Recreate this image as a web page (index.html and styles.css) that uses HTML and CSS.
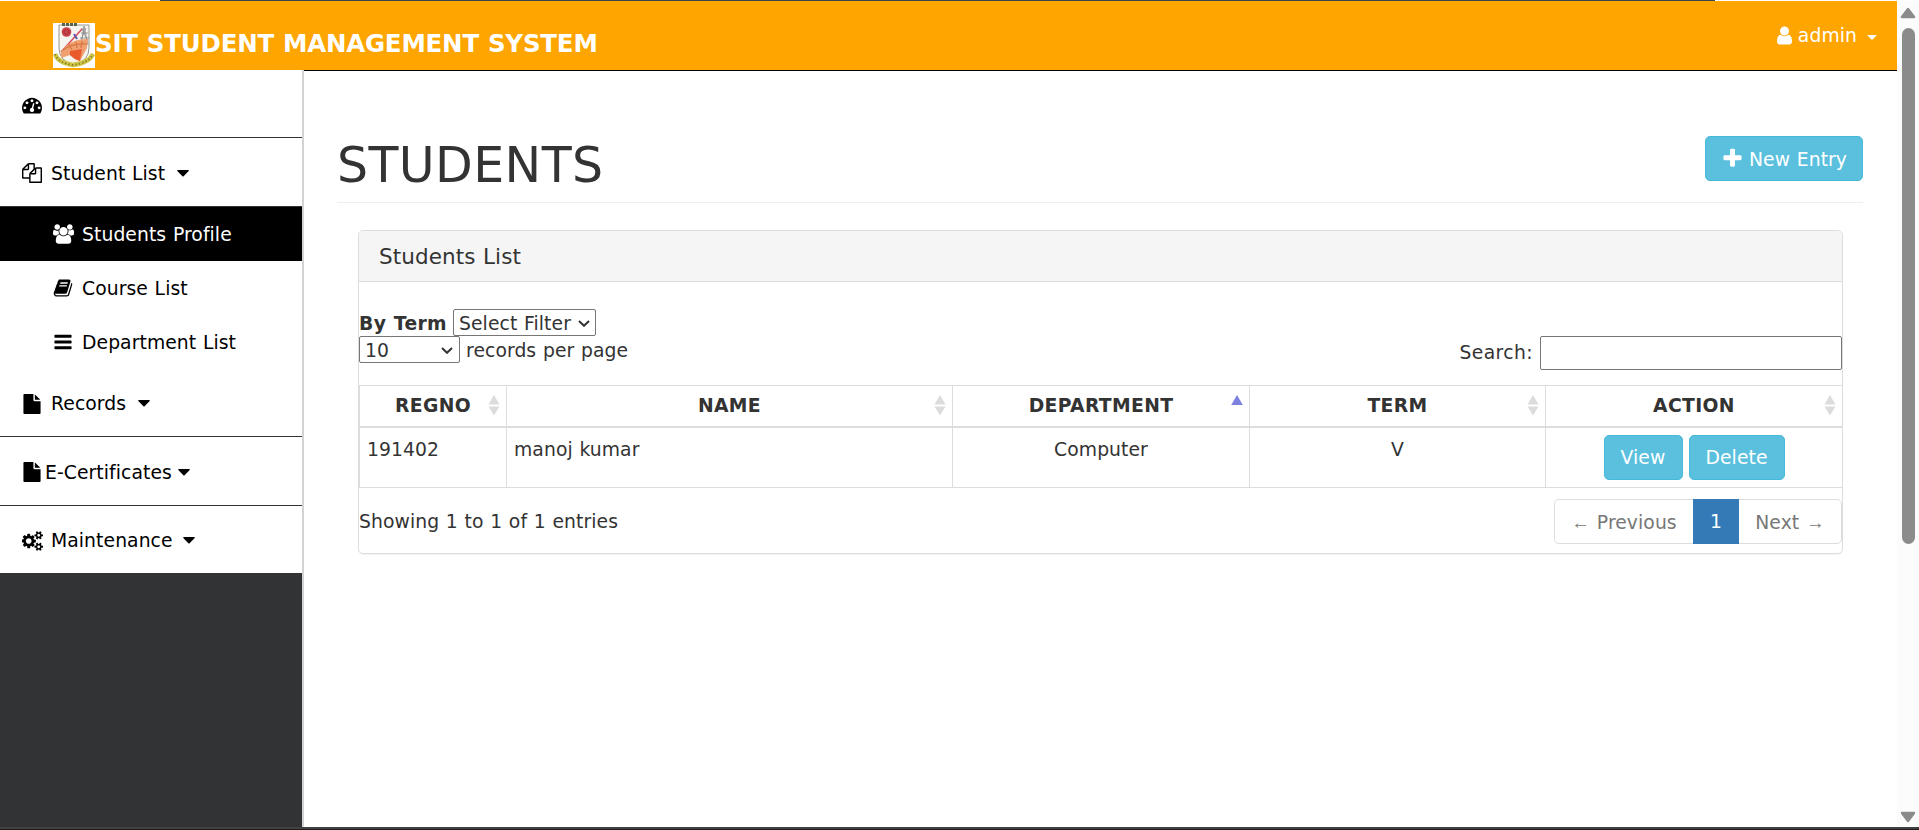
FILE: index.html
```html
<!DOCTYPE html>
<html lang="en">
<head>
<meta charset="utf-8">
<title>SIT Student Management System</title>
<link rel="stylesheet" href="styles.css">
</head>
<body>
<svg class="defs" width="0" height="0">
  <symbol id="user" viewBox="256 0 1280 1792"><path d="M1536 1399q0 109-62.5 187t-150.5 78h-854q-88 0-150.5-78t-62.5-187q0-85 8.5-160.5t31.5-152 58.5-131 94-89 134.5-34.5q131 128 313 128t313-128q76 0 134.5 34.5t94 89 58.5 131 31.5 152 8.5 160.5zm-256-887q0 159-112.5 271.5t-271.5 112.5-271.5-112.5-112.5-271.5 112.5-271.5 271.5-112.5 271.5 112.5 112.5 271.5z"/></symbol>
  <symbol id="plus" viewBox="0 0 1792 1792"><path d="M1600 736v192q0 40-28 68t-68 28h-416v416q0 40-28 68t-68 28h-192q-40 0-68-28t-28-68v-416h-416q-40 0-68-28t-28-68v-192q0-40 28-68t68-28h416v-416q0-40 28-68t68-28h192q40 0 68 28t28 68v416h416q40 0 68 28t28 68z"/></symbol>
  <symbol id="bars" viewBox="0 0 1792 1792"><path d="M1664 1344v128q0 26-19 45t-45 19h-1408q-26 0-45-19t-19-45v-128q0-26 19-45t45-19h1408q26 0 45 19t19 45zm0-512v128q0 26-19 45t-45 19h-1408q-26 0-45-19t-19-45v-128q0-26 19-45t45-19h1408q26 0 45 19t19 45zm0-512v128q0 26-19 45t-45 19h-1408q-26 0-45-19t-19-45v-128q0-26 19-45t45-19h1408q26 0 45 19t19 45z"/></symbol>
  <symbol id="file" viewBox="0 0 1792 1792"><path d="M1152 512v-472q22 14 36 28l408 408q14 14 28 36h-472zm-128 32q0 40 28 68t68 28h544v1056q0 40-28 68t-68 28h-1344q-40 0-68-28t-28-68v-1600q0-40 28-68t68-28h800v544z"/></symbol>
  <symbol id="files" viewBox="0 0 1792 1792"><path d="M1696 384q40 0 68 28t28 68v1216q0 40-28 68t-68 28h-960q-40 0-68-28t-28-68v-288h-544q-40 0-68-28t-28-68v-672q0-40 20-88t48-76l408-408q28-28 76-48t88-20h416q40 0 68 28t28 68v328q68-40 128-40h416zm-544 213l-299 299h299v-299zm-640-384l-299 299h299v-299zm196 647l316-316v-416h-384v416q0 40-28 68t-68 28h-416v640h512v-256q0-40 20-88t48-76zm956 804v-1152h-384v416q0 40-28 68t-68 28h-416v640h896z"/></symbol>
  <symbol id="dash" viewBox="0 0 1792 1792"><path d="M384 1152q0-53-37.5-90.5t-90.5-37.5-90.5 37.5-37.5 90.5 37.5 90.5 90.5 37.5 90.5-37.5 37.5-90.5zm192-448q0-53-37.5-90.5t-90.5-37.5-90.5 37.5-37.5 90.5 37.5 90.5 90.5 37.5 90.5-37.5 37.5-90.5zm428 481l101-382q6-26-7.5-48.5t-38.5-29.5-48 6.5-30 39.5l-101 382q-60 5-107 43.5t-63 98.5q-20 77 20 146t117 89 146-20 89-117q16-60-6-117t-72-91zm660-33q0-53-37.5-90.5t-90.5-37.5-90.5 37.5-37.5 90.5 37.5 90.5 90.5 37.5 90.5-37.5 37.5-90.5zm-640-640q0-53-37.5-90.5t-90.5-37.5-90.5 37.5-37.5 90.5 37.5 90.5 90.5 37.5 90.5-37.5 37.5-90.5zm448 192q0-53-37.5-90.5t-90.5-37.5-90.5 37.5-37.5 90.5 37.5 90.5 90.5 37.5 90.5-37.5 37.5-90.5zm320 448q0 261-141 483-19 29-54 29h-1402q-35 0-54-29-141-221-141-483 0-182 71-348t191-286 286-191 348-71 348 71 286 191 191 286 71 348z"/></symbol>
  <symbol id="book" viewBox="0 0 1792 1792"><path d="M1703 478q40 57 18 129l-275 906q-19 64-76.5 107.5t-122.5 43.5h-923q-77 0-148.5-53.5t-99.5-131.5q-24-67-2-127 0-4 3-27t4-37q1-8-3-21.5t-3-19.5q2-11 8-21t16.5-23.5 16.5-23.5q23-38 45-91.5t30-91.5q3-10 .5-30t-.5-28q3-11 17-28t17-23q21-36 42-92t25-90q1-9-2.5-32t.5-28q4-13 22-30.5t22-22.5q19-26 42.5-84.5t27.5-96.5q1-8-3-25.5t-2-26.5q2-8 9-18t18-23 17-21q8-12 16.5-30.5t15-35 16-36 19.5-32 26.5-23.5 36-11.5 47.5 5.5l-1 3q38-9 51-9h761q74 0 114 56t18 130l-274 906q-36 119-71.5 153.5t-128.5 34.5h-869q-27 0-38 15-11 16-1 43 24 70 144 70h923q29 0 56-15.5t35-41.5l300-987q7-22 5-57 38 15 59 43zm-1064 2q-4 13 2 22.5t20 9.5h608q13 0 25.5-9.5t16.5-22.5l21-64q4-13-2-22.5t-20-9.5h-608q-13 0-25.5 9.5t-16.5 22.5zm-83 256q-4 13 2 22.5t20 9.5h608q13 0 25.5-9.5t16.5-22.5l21-64q4-13-2-22.5t-20-9.5h-608q-13 0-25.5 9.5t-16.5 22.5z"/></symbol>
  <symbol id="cogs" viewBox="0 0 1920 1792"><path d="M832 896q0-106-75-181t-181-75-181 75-75 181 75 181 181 75 181-75 75-181zm768 512q0-52-38-90t-90-38-90 38-38 90q0 53 37.5 90.5t90.5 37.5 90.5-37.5 37.5-90.5zm0-1024q0-52-38-90t-90-38-90 38-38 90q0 53 37.5 90.5t90.5 37.5 90.5-37.5 37.5-90.5zm-384 421v185q0 10-7 19.5t-16 10.5l-155 24q-11 35-32 76 34 48 90 115 7 11 7 20 0 12-7 19-23 30-82.5 89.5t-78.5 59.5q-11 0-21-7l-115-90q-37 19-77 31-11 108-23 155-7 24-30 24h-186q-11 0-20-7.5t-10-17.5l-23-153q-34-10-75-31l-118 89q-7 7-20 7-11 0-21-8-144-133-144-160 0-9 7-19 10-14 41-53t47-61q-23-44-35-82l-152-24q-10-1-17-9.5t-7-19.5v-185q0-10 7-19.5t16-10.5l155-24q11-35 32-76-34-48-90-115-7-11-7-20 0-12 7-20 22-30 82-89t79-59q11 0 21 7l115 90q34-18 77-32 11-108 23-154 7-24 30-24h186q11 0 20 7.5t10 17.5l23 153q34 10 75 31l118-89q8-7 20-7 11 0 21 8 144 133 144 160 0 8-7 19-12 16-42 54t-45 60q23 48 34 82l152 23q10 2 17 10.5t7 19.5zm640 533v140q0 16-149 31-12 27-30 52 51 113 51 138 0 4-4 7-122 71-124 71-8 0-46-47t-52-68q-20 2-30 2t-30-2q-14 21-52 68t-46 47q-2 0-124-71-4-3-4-7 0-25 51-138-18-25-30-52-149-15-149-31v-140q0-16 149-31 13-29 30-52-51-113-51-138 0-4 4-7 4-2 35-20t59-34 30-16q8 0 46 46.5t52 67.5q20-2 30-2t30 2q51-71 92-112l6-2q4 0 124 70 4 3 4 7 0 25-51 138 17 23 30 52 149 15 149 31zm0-1024v140q0 16-149 31-12 27-30 52 51 113 51 138 0 4-4 7-122 71-124 71-8 0-46-47t-52-68q-20 2-30 2t-30-2q-14 21-52 68t-46 47q-2 0-124-71-4-3-4-7 0-25 51-138-18-25-30-52-149-15-149-31v-140q0-16 149-31 13-29 30-52-51-113-51-138 0-4 4-7 4-2 35-20t59-34 30-16q8 0 46 46.5t52 67.5q20-2 30-2t30 2q51-71 92-112l6-2q4 0 124 70 4 3 4 7 0 25-51 138 17 23 30 52 149 15 149 31z"/></symbol>
  <symbol id="group" viewBox="64 0 1920 1792"><path d="M657 896q-162 5-265 128h-134q-82 0-138-40.5t-56-118.5q0-353 124-353 6 0 43.5 21t97.5 42.5 119 21.5q67 0 133-23-5 37-5 66 0 159 93 294zm1071 637q0 120-73 189.5t-194 69.5h-874q-121 0-194-69.5t-73-189.5q0-53 3.5-103.5t14-109 26.5-108.5 43-97.5 62-81 85.5-53.5 111.5-20q10 0 43 21.5t73 48 107 48 135 21.5 135-21.5 107-48 73-48 43-21.5q61 0 111.5 20t85.5 53.5 62 81 43 97.5 26.5 108.5 14 109 3.5 103.5zm-1024-1277q0 106-75 181t-181 75-181-75-75-181 75-181 181-75 181 75 75 181zm704 384q0 159-112.5 271.5t-271.5 112.5-271.5-112.5-112.5-271.5 112.5-271.5 271.5-112.5 271.5 112.5 112.5 271.5zm576 225q0 78-56 118.5t-138 40.5h-134q-103-123-265-128 93-135 93-294 0-29-5-66 66 23 133 23 59 0 119-21.5t97.5-42.5 43.5-21q124 0 124 353zm-128-609q0 106-75 181t-181 75-181-75-75-181 75-181 181-75 181 75 75 181z"/></symbol>
  <symbol id="caret" viewBox="0 0 12 7"><path d="M.8 0h10.4q.8.2.5.9L6.6 6.2q-.6.5-1.2 0L.3.9Q0 .2.8 0z"/></symbol>
  <symbol id="chevron" viewBox="0 0 12 7"><path d="M1 1l5 4.8L11 1" fill="none" stroke="#333" stroke-width="2"/></symbol>
  <symbol id="sort" viewBox="0 0 12 21"><path d="M6 0l5.5 9.5H.5zM6 20.500l5.500-9H.5z" fill="#dcdcdc"/></symbol>
  <symbol id="sort-asc" viewBox="0 0 12 21"><path d="M6 0l5.800 10H.2z" fill="#7d80df"/></symbol>
</svg>
<div class="strip-top"><span></span></div>
<div class="window">
  <div class="page">
    <header class="topbar">
      <div class="brand">
        <svg class="logo" viewBox="0 0 42 45">
          <rect width="42" height="45" fill="#fff"/>
          <path d="M6 2h30v23q0 13-15 17Q6 38 6 25z" fill="#f6f4ee" stroke="#98968c"/>
          <path d="M9 1.500h15" stroke="#59644c" stroke-width="3" stroke-dasharray="3 1"/>
          <circle cx="13.500" cy="9" r="4.800" fill="#c9444a"/><circle cx="13.500" cy="9" r="2.500" fill="none" stroke="#8e1b2b" stroke-dasharray="1 1"/>
          <path d="M28 22l3-19 4 19M28 10h7M27 15h9M29 5l5 12M33 5l-5 12" fill="none" stroke="#85858a" stroke-width=".8"/>
          <path d="M8 29L29 6" stroke="#d6495c" stroke-width="1.500"/><path d="M21 11l3 5" stroke="#6458a8" stroke-width="2"/>
          <path d="M8 29q8-13 27-13l-1 9-7 13q-6-1-10-6l-9 3z" fill="#f0a070"/>
          <path d="M17 28l12-2-2 12q-6-2-10-6z" fill="#e85a2c"/>
          <path d="M10 27q9-7 24-6M16 21l3 6M23 19l1 6M29 18l-1 7" fill="none" stroke="#d7753f" stroke-width="1.200"/>
          <path d="M2 31q3 9 18 11Q36 40 40 31" fill="none" stroke="#d0c545" stroke-width="4.500"/>
          <path d="M2 31q3 9 18 11Q36 40 40 31" fill="none" stroke="#85802f" stroke-width="1.800" stroke-dasharray="1.500 2"/>
        </svg>
        <span class="brand-name">SIT STUDENT MANAGEMENT SYSTEM</span>
      </div>
      <div class="account"><svg class="i-user"><use href="#user"/></svg><span>admin</span><i class="caret"></i></div>
    </header>
    <div class="main">
      <nav class="sidebar">
        <ul class="menu">
          <li class="item"><svg class="ic"><use href="#dash"/></svg><span>Dashboard</span></li>
          <li class="item list"><svg class="ic"><use href="#files"/></svg><span>Student List</span><svg class="drop"><use href="#caret"/></svg></li>
          <li class="sub active"><svg class="ic people"><use href="#group"/></svg><span>Students Profile</span></li>
          <li class="sub"><svg class="ic"><use href="#book"/></svg><span>Course List</span></li>
          <li class="sub"><svg class="ic"><use href="#bars"/></svg><span>Department List</span></li>
          <li class="item"><svg class="ic"><use href="#file"/></svg><span>Records</span><svg class="drop"><use href="#caret"/></svg></li>
          <li class="item tight"><svg class="ic"><use href="#file"/></svg><span>E-Certificates</span><svg class="drop"><use href="#caret"/></svg></li>
          <li class="item last"><svg class="ic gears"><use href="#cogs"/></svg><span>Maintenance</span><svg class="drop"><use href="#caret"/></svg></li>
        </ul>
      </nav>
      <main class="content">
        <div class="page-head">
          <h1>STUDENTS</h1>
          <button class="btn new"><svg class="i-plus"><use href="#plus"/></svg><span>New Entry</span></button>
        </div>
        <section class="panel">
          <h2>Students List</h2>
          <div class="tools">
            <div class="filters">
              <div class="line"><b>By Term</b><span class="select term"><span>Select Filter</span><svg><use href="#chevron"/></svg></span></div>
              <div class="line"><span class="select count"><span>10</span><svg><use href="#chevron"/></svg></span><span class="per">records per page</span></div>
            </div>
            <label class="search"><span>Search:</span><input type="text"></label>
          </div>
          <table>
            <colgroup><col class="c1"><col class="c2"><col class="c3"><col class="c4"><col class="c5"></colgroup>
            <thead><tr>
              <th><div><span>REGNO</span><svg><use href="#sort"/></svg></div></th>
              <th><div><span>NAME</span><svg><use href="#sort"/></svg></div></th>
              <th><div><span>DEPARTMENT</span><svg><use href="#sort-asc"/></svg></div></th>
              <th><div><span>TERM</span><svg><use href="#sort"/></svg></div></th>
              <th><div><span>ACTION</span><svg><use href="#sort"/></svg></div></th>
            </tr></thead>
            <tbody><tr>
              <td>191402</td><td>manoj kumar</td><td class="mid">Computer</td><td class="mid">V</td>
              <td><div class="actions"><button class="btn view">View</button><button class="btn del">Delete</button></div></td>
            </tr></tbody>
          </table>
          <div class="foot">
            <span>Showing 1 to 1 of 1 entries</span>
            <div class="pager"><span class="prev"><i>←</i> Previous</span><span class="cur">1</span><span class="next">Next <i>→</i></span></div>
          </div>
        </section>
      </main>
    </div>
  </div>
  <div class="scroll">
    <svg width="16" height="12" viewBox="0 0 16 12"><path d="M7 1.200q1-1 2 0l6 8q.8 2-1 2H2q-1.800 0-1-2z"/></svg>
    <div class="thumb"></div>
    <svg class="down" width="16" height="12" viewBox="0 0 16 12"><path d="M7 10.800q1 1 2 0l6-8q.8-2-1-2H2q-1.800 0-1 2z"/></svg>
  </div>
</div>
<div class="strip-bottom"></div>
</body>
</html>
```
FILE: styles.css
```css
* { box-sizing: border-box; }
body { margin: 0; width: 1919px; height: 830px; overflow: hidden; display: flex; flex-direction: column; background: #fff; color: #333; font: 18.75px "DejaVu Sans", Verdana, sans-serif; letter-spacing: 0.08px; word-spacing: 0.64px; }
svg { fill: currentColor; flex: none; display: block; }
.defs { position: absolute; }
.strip-top { height: 1px; padding-left: 160px; background: #fff; flex: none; }
.strip-top span { display: block; width: 1555px; height: 1px; background: #35494a; }
.strip-bottom { height: 3px; flex: none; background: #424242; border-bottom: 1px solid #1e1e1e; }
.window { display: flex; height: 826px; }
.page { width: 1897px; display: flex; flex-direction: column; }
.topbar { height: 69px; flex: none; background: #ffa500; color: #fff; display: flex; justify-content: space-between; padding: 22px 20px 0 53px; }
.brand { display: flex; }
.logo { width: 42px; height: 45px; }
.brand-name { font-weight: bold; font-size: 24.5px; line-height: 42px; letter-spacing: -0.2px; white-space: nowrap; }
.account { display: flex; align-items: center; height: 24px; }
.i-user { width: 15px; height: 21px; margin-right: 6px; }
.caret { margin-left: 10px; border: 5px solid transparent; border-top-color: #fff; border-bottom: 0; margin-top: 4px; }
.main { display: flex; flex: 1; }
.sidebar { width: 304px; background: #323335; border-right: 2px solid #d3d3d3; color: #000; }
.menu { list-style: none; margin: 0; padding: 0; background: #fff; }
.item { display: flex; align-items: center; height: 68px; padding: 2px 0 0 22px; border-bottom: 1px solid #323335; }
.item.list, .item.tight { height: 69px; }
.item.last { border: 0; height: 67px; }
.ic { width: 20px; height: 20px; margin-right: 9px; }
.gears { width: 22px; margin-right: 7px; }
.drop { width: 12px; height: 7px; margin: 0 0 0 12px; }
.tight .ic { margin-right: 3px; }
.tight .drop { margin-left: 6px; }
.last .drop { margin-left: 10px; }
.sub { display: flex; align-items: center; height: 54px; padding-left: 53px; }
.people { width: 21px; margin-right: 8px; }
.sub.active { background: #000; color: #fff; }
.content { flex: 1; border-top: 1px solid #000; padding: 65px 34px 0 33px; }
.page-head { height: 67px; border-bottom: 1px solid #eee; display: flex; justify-content: space-between; align-items: flex-start; }
h1 { margin: 0; font-weight: 400; font-size: 49px; line-height: 59px; letter-spacing: 0.4px; }
.btn { font: inherit; letter-spacing: inherit; word-spacing: inherit; color: #fff; background: #5bc0de; border: 1px solid #46b8da; border-radius: 5px; height: 45px; padding: 0; display: flex; align-items: center; justify-content: center; }
.new { width: 158px; padding-top: 2px; }
.i-plus { width: 23px; height: 23px; margin: -2px 5px 0 0; }
.panel { margin: 27px 20px 0 21px; width: 1485px; height: 324px; border: 1px solid #ddd; border-radius: 5px; box-shadow: 0 1px 1px rgba(0,0,0,.05); }
h2 { margin: 0; height: 51px; line-height: 52px; padding-left: 20px; background: #f5f5f5; border-bottom: 1px solid #ddd; border-radius: 4px 4px 0 0; font-size: 21.5px; font-weight: 400; }
.tools { height: 103px; display: flex; justify-content: space-between; padding-top: 27px; }
.line { display: flex; align-items: center; height: 27px; }
.line b { width: 94px; letter-spacing: 0.35px; padding-top: 2px; }
.select { display: flex; align-items: center; justify-content: space-between; height: 27px; border: 1px solid #767676; border-radius: 2px; padding: 1px 6px 0 5px; white-space: nowrap; }
.select svg { width: 12px; height: 7px; }
.term { width: 143px; padding-right: 5px; }
.count { width: 101px; }
.per { margin-left: 6px; padding-top: 1px; }
.search { display: flex; align-items: center; height: 34px; margin-top: 27px; }
.search span { margin-right: 7px; padding-bottom: 1px; letter-spacing: 0.4px; }
.search input { width: 302px; height: 34px; border: 1px solid #767676; border-radius: 2px; padding: 0; }
table { border-collapse: collapse; table-layout: fixed; width: 1483px; }
.c1 { width: 147px; } .c2 { width: 446px; } .c3 { width: 297px; } .c4 { width: 296px; } .c5 { width: 297px; }
th, td { border: 1px solid #ddd; padding: 0; }
th { border-bottom-width: 2px; height: 41px; letter-spacing: 0.35px; }
th div { display: flex; align-items: center; padding: 0 6px 0 18px; height: 38px; }
th span { flex: 1; text-align: center; }
th svg { width: 12px; height: 21px; }
td { height: 61px; vertical-align: top; padding: 11px 7px 0; }
td.mid { text-align: center; }
td:last-child { padding: 7px 0 0; }
.actions { display: flex; justify-content: center; gap: 6px; }
.view { width: 79px; } .del { width: 96px; }
.foot { display: flex; justify-content: space-between; height: 66px; padding-top: 11px; }
.foot > span { line-height: 46px; }
.pager { display: flex; height: 45px; width: 288px; line-height: 45px; border: 1px solid #ddd; border-radius: 5px; color: #777; text-align: center; }
.pager i { font-family: "Liberation Sans", Arial, sans-serif; font-style: normal; line-height: 1; }
.prev { width: 138px; white-space: nowrap; }
.cur { width: 46px; height: 45px; margin-top: -1px; line-height: 46px; background: #337ab7; color: #fff; }
.next { flex: 1; white-space: nowrap; }
.scroll { width: 22px; background: #fcfcfc; display: flex; flex-direction: column; align-items: center; padding: 6px 0 4px; color: #8b8b8b; }
.thumb { width: 13px; height: 516px; margin-top: 9px; border-radius: 7px; background: #8b8b8b; }
.down { margin-top: auto; }
```
